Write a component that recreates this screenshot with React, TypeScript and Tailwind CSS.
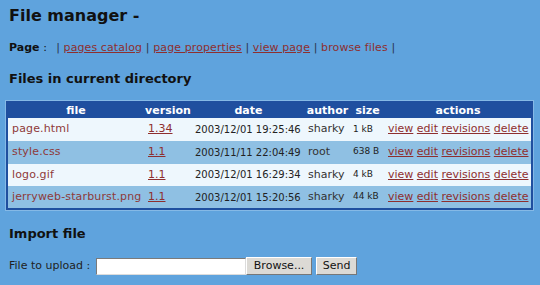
import React from 'react';

const files = [
  { name: 'page.html', version: '1.34', date: '2003/12/01 19:25:46', author: 'sharky', size: '1 kB' },
  { name: 'style.css', version: '1.1', date: '2003/11/11 22:04:49', author: 'root', size: '638 B' },
  { name: 'logo.gif', version: '1.1', date: '2003/12/01 16:29:34', author: 'sharky', size: '4 kB' },
  { name: 'jerryweb-starburst.png', version: '1.1', date: '2003/12/01 15:20:56', author: 'sharky', size: '44 kB' },
];

const link = 'text-[#8e2f2f] underline';
const pipe = 'text-[#2a3550]';

export default function App() {
  return (
    <div
      className="w-[540px] h-[285px] overflow-hidden bg-[#5fa3dd] px-[9px] text-[11px] text-[#111]"
      style={{ fontFamily: '"DejaVu Sans", Verdana, sans-serif' }}
    >
      <h1 className="pt-[6px] text-[16px] leading-[19px] font-bold">File manager -</h1>

      {/* page menu */}
      <div className="mt-[16px] leading-[14px] tracking-[0.1px] whitespace-nowrap">
        <span className="font-bold tracking-normal">Page</span> :&nbsp;&nbsp;<span className={`${pipe} ml-[2px]`}>|</span>{' '}
        <a className={link}>pages catalog</a> <span className={pipe}>|</span>{' '}
        <a className={link}>page properties</a> <span className={pipe}>|</span>{' '}
        <a className={link}>view page</a> <span className={pipe}>|</span>{' '}
        <span className="text-[#8e2f2f]">browse files</span> <span className={pipe}>|</span>
      </div>

      <h2 className="mt-[16px] text-[13px] leading-[16px] font-bold">Files in current directory</h2>

      {/* files table */}
      <div className="mt-[13px] -ml-[4px] w-[529px] border border-[#85b9e6]">
        <table className="w-full table-fixed border-collapse border-2 border-[#1f4f9f]">
          <colgroup>
            <col className="w-[137px]" />
            <col className="w-[48px]" />
            <col className="w-[113px]" />
            <col className="w-[45px]" />
            <col className="w-[35px]" />
            <col />
          </colgroup>
          <thead>
            <tr className="h-[16px] bg-[#1f4f9f] text-white font-bold leading-[14px]">
              <th className="font-bold">file</th>
              <th className="font-bold">version</th>
              <th className="font-bold">date</th>
              <th className="font-bold">author</th>
              <th className="font-bold">size</th>
              <th className="font-bold">actions</th>
            </tr>
          </thead>
          <tbody>
            {files.map((f, i) => (
              <tr key={f.name} className={`h-[22.75px] ${i % 2 === 0 ? 'bg-[#eef7fd]' : 'bg-[#8fc0e3]'}`}>
                <td className="pl-[4px] text-[#8e3a3a] whitespace-nowrap tracking-[0.15px]">{f.name}</td>
                <td className="pl-[4px]">
                  <a className={link}>{f.version}</a>
                </td>
                <td className="pl-[3px] text-[10px] text-[#222] whitespace-nowrap">{f.date}</td>
                <td className="pl-[3px] text-[#333]">{f.author}</td>
                <td className="pl-[3px] text-[9px] text-[#222] whitespace-nowrap">{f.size}</td>
                <td className="pl-[3px] whitespace-nowrap">
                  <a className={link}>view</a> <a className={link}>edit</a>{' '}
                  <a className={link}>revisions</a> <a className={link}>delete</a>
                </td>
              </tr>
            ))}
          </tbody>
        </table>
      </div>

      <h2 className="mt-[15px] text-[13px] leading-[16px] font-bold">Import file</h2>

      {/* upload form */}
      <div className="mt-[15px] flex items-center h-[18px]">
        <span className="text-[#222]">File to upload :</span>
        <input
          type="text"
          className="ml-[6px] w-[150px] h-[17px] bg-white border border-t-[#7a7a7a] border-l-[#7a7a7a] border-b-[#dcdcdc] border-r-[#dcdcdc] outline-none"
        />
        <button className="w-[66px] h-[18px] bg-[#dcdad5] border border-t-white border-l-white border-b-[#777] border-r-[#777] text-[11px] text-[#111] leading-[14px]">
          Browse...
        </button>
        <button className="ml-[4px] w-[41px] h-[18px] bg-[#dcdad5] border border-t-white border-l-white border-b-[#777] border-r-[#777] text-[11px] text-[#111] leading-[14px]">
          Send
        </button>
      </div>
    </div>
  );
}
